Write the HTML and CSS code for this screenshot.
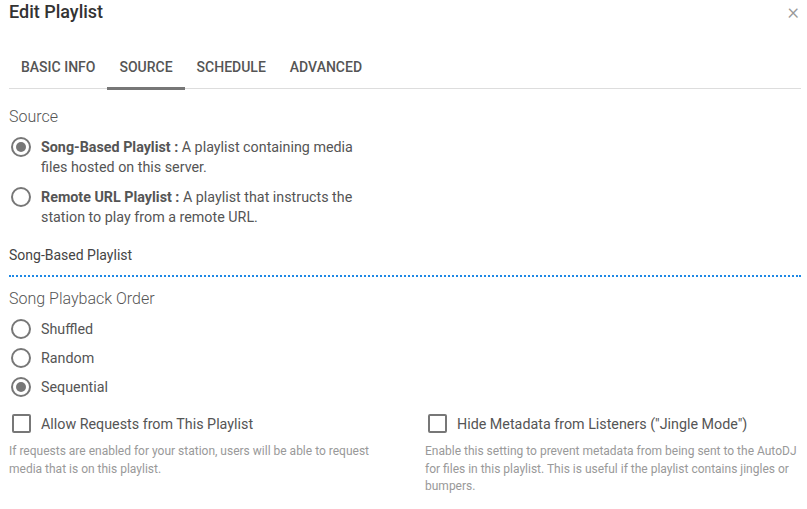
FILE: index.html
```html
<!DOCTYPE html>
<html lang="en">
<head>
  <meta charset="UTF-8" />
  <title>Edit Playlist</title>
  <link rel="stylesheet" href="styles.css">
</head>
<body>
  <div class="modal">
    <div class="modal-header">
      <h1>Edit Playlist</h1>
      <span class="close">&times;</span>
    </div>

    <ul class="tabs">
      <li>Basic Info</li>
      <li class="active">Source</li>
      <li>Schedule</li>
      <li>Advanced</li>
    </ul>

    <div class="group-label">Source</div>
    <div class="radio-list">
      <label class="radio checked">
        <span class="dot"></span>
        <span class="text"><b>Song-Based Playlist :</b> A playlist containing media files hosted on this server.</span>
      </label>
      <label class="radio">
        <span class="dot"></span>
        <span class="text"><b>Remote URL Playlist :</b> A playlist that instructs the station to play from a remote URL.</span>
      </label>
    </div>

    <div class="section-title">Song-Based Playlist</div>

    <div class="group-label order">Song Playback Order</div>
    <div class="radio-list tight">
      <label class="radio"><span class="dot"></span><span class="text">Shuffled</span></label>
      <label class="radio"><span class="dot"></span><span class="text">Random</span></label>
      <label class="radio checked"><span class="dot"></span><span class="text">Sequential</span></label>
    </div>

    <div class="options">
      <div class="option">
        <label class="check"><span class="box"></span><span class="text">Allow Requests from This Playlist</span></label>
        <p class="help">If requests are enabled for your station, users will be able to request media that is on this playlist.</p>
      </div>
      <div class="option">
        <label class="check"><span class="box"></span><span class="text">Hide Metadata from Listeners ("Jingle Mode")</span></label>
        <p class="help">Enable this setting to prevent metadata from being sent to the AutoDJ for files in this playlist. This is useful if the playlist contains jingles or bumpers.</p>
      </div>
    </div>
  </div>
</body>
</html>
```

FILE: styles.css
```css
body {
  margin: 0;
  font-family: Roboto, "Noto Sans", Arial, sans-serif;
  background: #fff;
  color: #444;
}
.modal {
  padding: 0 6px 0 9px;
}
.modal-header {
  display: flex;
  justify-content: space-between;
  align-items: center;
  height: 22px;
}
.modal-header h1 {
  margin: 0;
  font-size: 18px;
  font-weight: 500;
  color: #333;
}
.close {
  font-size: 22px;
  font-weight: 300;
  color: #999;
  margin-right: 2px;
}
.tabs {
  display: flex;
  list-style: none;
  margin: 32px 0 0;
  padding: 0;
  border-bottom: 1px solid #ddd;
}
.tabs li {
  padding: 5px 12px 12px;
  font-size: 14px;
  font-weight: 500;
  color: #555;
  text-transform: uppercase;
  border-bottom: 3px solid transparent;
  margin-bottom: -2px;
}
.tabs li.active {
  border-bottom-color: #777;
}
.group-label {
  margin-top: 18px;
  font-size: 16px;
  font-weight: 300;
  color: #555;
}
.group-label.order {
  margin-top: 12px;
}
.radio-list {
  display: flex;
  flex-direction: column;
  gap: 10px;
  margin-top: 11px;
  width: 352px;
}
.radio-list.tight {
  gap: 9px;
}
.radio {
  display: flex;
  align-items: flex-start;
  gap: 10px;
  font-size: 14.3px;
  line-height: 20px;
  color: #555;
}
.radio .dot {
  flex: none;
  width: 16px;
  height: 16px;
  border: 2px solid #777;
  border-radius: 50%;
  margin-left: 2px;
  position: relative;
}
.radio.checked .dot::after {
  content: "";
  position: absolute;
  left: 3px;
  top: 3px;
  width: 10px;
  height: 10px;
  border-radius: 50%;
  background: #777;
}
.radio b {
  font-weight: 700;
  color: #555;
}
.section-title {
  margin-top: 20px;
  padding-bottom: 12px;
  font-size: 14px;
  color: #444;
  border-bottom: 2px dotted #1e88e5;
}
.options {
  display: grid;
  grid-template-columns: 376px 376px;
  gap: 40px;
  margin-top: 17px;
}
.check {
  display: flex;
  align-items: center;
  gap: 10px;
  font-size: 14.3px;
  color: #555;
}
.check .box {
  flex: none;
  width: 15px;
  height: 15px;
  border: 2px solid #777;
  border-radius: 2px;
  margin-left: 3px;
}
.help {
  margin: 10px 0 0;
  font-size: 12px;
  line-height: 17.5px;
  color: #999;
}
```
